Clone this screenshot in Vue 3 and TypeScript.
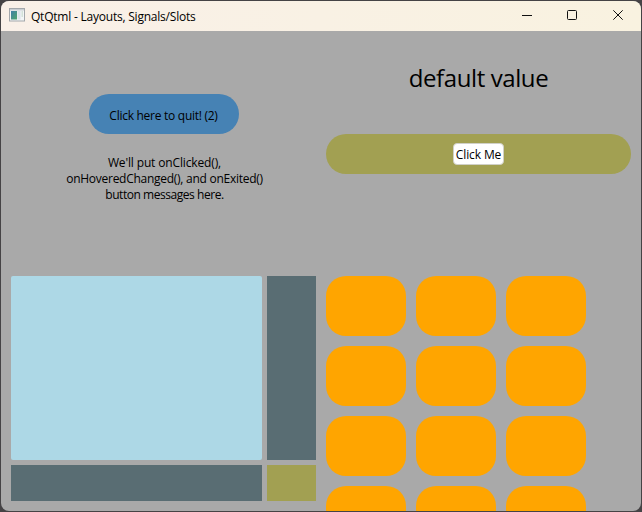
<script setup lang="ts">
import { ref } from 'vue'

const value = ref<string>('default value')
const quitCount = ref<number>(2)
const messageLines: string[] = [
  "We'll put onClicked(),",
  'onHoveredChanged(), and onExited()',
  'button messages here.',
]
const tileCount = 12
</script>

<template>
  <div class="desktop">
    <div class="window">
      <header class="titlebar">
        <svg class="app-icon" width="16" height="14" viewBox="0 0 16 14">
          <defs>
            <linearGradient id="pane" x1="0" y1="0" x2="1" y2="1">
              <stop offset="0" stop-color="#3f7fa8" />
              <stop offset="1" stop-color="#4fa66c" />
            </linearGradient>
          </defs>
          <rect x="0.5" y="0.5" width="15" height="12.5" fill="#f3f5f6" stroke="#a3a8ac" />
          <rect x="1" y="1" width="14" height="1.5" fill="#c9ced2" />
          <rect x="2" y="3" width="6" height="8.5" fill="url(#pane)" />
          <rect x="8.5" y="3" width="3" height="8.5" fill="#dce4e9" />
          <rect x="12.5" y="3" width="1.5" height="6" fill="#d3e2d9" />
        </svg>
        <span class="title">QtQtml - Layouts, Signals/Slots</span>
        <div class="controls">
          <svg width="10" height="10" viewBox="0 0 10 10"><path d="M0 5.5H10" /></svg>
          <svg class="maximize" width="10" height="10" viewBox="0 0 10 10"><rect x="0.5" y="0.5" width="9" height="9" rx="1" /></svg>
          <svg width="10" height="10" viewBox="0 0 10 10"><path d="M0.3 0.3L9.7 9.7M9.7 0.3L0.3 9.7" /></svg>
        </div>
      </header>

      <main class="content">
        <section class="quit-cell">
          <button class="quit" @click="quitCount++"><span>Click here to quit! ({{ quitCount }})</span></button>
          <p class="message">
            <span v-for="(line, i) in messageLines" :key="i" :class="['line', `line-${i}`]">{{ line }}</span>
          </p>
        </section>

        <section class="value-cell">
          <div class="value"><span>{{ value }}</span></div>
          <div class="pill"><button class="click-me"><span>Click Me</span></button></div>
        </section>

        <section class="panes">
          <div class="pane main-pane"></div>
          <div class="pane slate"></div>
          <div class="pane slate"></div>
          <div class="pane olive"></div>
        </section>

        <section class="tiles">
          <div v-for="n in tileCount" :key="n" class="tile"></div>
        </section>
      </main>
    </div>
  </div>
</template>

<style>
body {
  margin: 0;
  overflow: hidden;
}
</style>

<style scoped>
* {
  box-sizing: border-box;
}

.desktop {
  width: 642px;
  height: 512px;
  padding: 1px;
  background: #454345;
  font-family: "Open Sans", "Noto Sans", sans-serif;
  font-size: 12px;
  color: #000;
}

.window {
  width: 640px;
  height: 510px;
  border-radius: 8px;
  overflow: hidden;
  background: #a9a9a9;
}

.titlebar {
  display: flex;
  align-items: center;
  height: 30px;
  padding-left: 8px;
  background: linear-gradient(90deg, #f9f0e8, #f9f2e0);
}

.app-icon {
  margin-bottom: 2px;
}

.title {
  margin-left: 6px;
  white-space: nowrap;
  letter-spacing: -0.22px;
}

.controls {
  display: flex;
  gap: 35px;
  margin-left: auto;
  margin-right: 18px;
  margin-bottom: 2px;
}

.controls svg {
  fill: none;
  stroke: #111;
  stroke-width: 1;
}

.controls .maximize {
  margin-right: 1px;
}

.content {
  display: grid;
  grid-template-columns: 305px 305px;
  grid-template-rows: 225px 225px;
  gap: 10px;
  height: 480px;
  padding: 10px;
}

button {
  border: 0;
  padding: 0;
  font: inherit;
  color: inherit;
  white-space: nowrap;
}

.quit-cell {
  display: flex;
  flex-direction: column;
  align-items: center;
  padding-top: 53px;
}

.quit {
  width: 150px;
  height: 40px;
  padding-top: 2px;
  border-radius: 20px;
  background: #4682b4;
  letter-spacing: -0.27px;
}

.message {
  display: flex;
  flex-direction: column;
  align-items: center;
  margin: 21px 0 0;
  padding-left: 2px;
  line-height: 16px;
  letter-spacing: -0.27px;
  white-space: nowrap;
}

.line-0 {
  letter-spacing: -0.14px;
}

.line-2 {
  letter-spacing: -0.45px;
}

.value-cell {
  display: flex;
  flex-direction: column;
}

.value {
  height: 93px;
  padding-top: 20px;
  text-align: center;
  font-size: 24px;
  line-height: 34px;
  letter-spacing: -0.4px;
}

.pill {
  display: flex;
  align-items: center;
  justify-content: center;
  height: 40px;
  border-radius: 20px;
  background: #a2a052;
}

.click-me {
  width: 51px;
  height: 22px;
  padding-top: 2px;
  border: 1px solid #d0d0c8;
  border-radius: 4px;
  background: #fff;
  line-height: 18px;
  letter-spacing: -0.12px;
}

.panes {
  display: grid;
  grid-template-columns: 251px 49px;
  grid-template-rows: 184px 36px;
  gap: 5px;
}

.main-pane {
  border-radius: 2px;
  background: #add8e6;
}

.slate {
  background: #596d73;
}

.olive {
  background: #a2a052;
}

.tiles {
  display: grid;
  grid-template-columns: repeat(3, 80px);
  grid-auto-rows: 60px;
  gap: 10px;
}

.tile {
  border-radius: 20px;
  background: #ffa500;
}
</style>
